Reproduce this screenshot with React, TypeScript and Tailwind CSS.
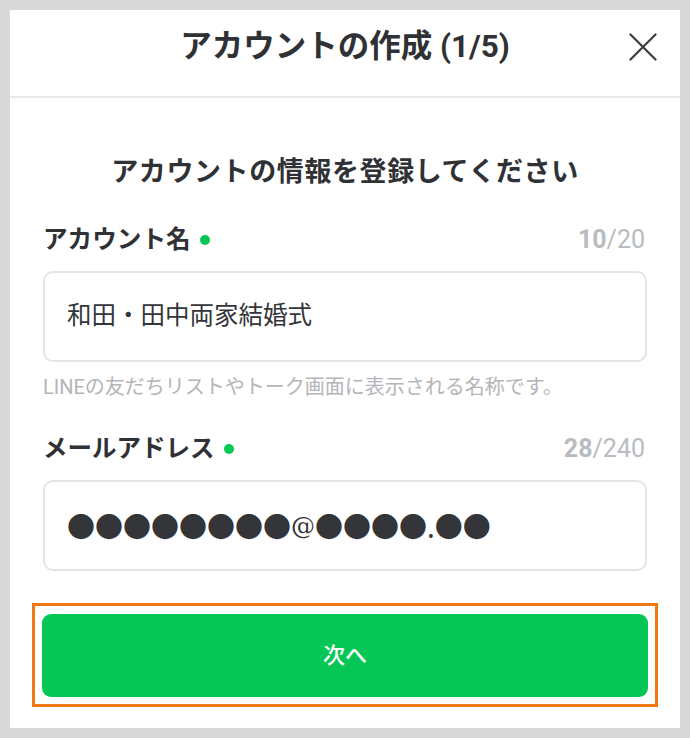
import React from "react";

const FONT = { fontFamily: 'Roboto, "Noto Sans CJK JP", sans-serif' };

function CloseIcon() {
  return (
    <svg width="28" height="28" viewBox="0 0 28 28" fill="none">
      <path d="M1.5 1.5 L26.5 26.5 M26.5 1.5 L1.5 26.5" stroke="#3a3c40" strokeWidth="2.2" strokeLinecap="round" />
    </svg>
  );
}

function Dot() {
  return <span className="ml-[9px] inline-block h-[10px] w-[10px] rounded-full bg-[#06c755]" />;
}

export default function App() {
  return (
    <div className="w-[690px] h-[738px] bg-[#d9d9d9] p-[10px]" style={FONT}>
      <div className="flex h-full flex-col bg-white">
        <div className="grid h-[88px] grid-cols-[1fr_auto_1fr] items-center border-b-2 border-[#e8e8e8] pb-[12px]">
          <div />
          <div className="text-[31.5px] font-bold leading-[40px] text-[#2f3135]">アカウントの作成 (1/5)</div>
          <div className="flex justify-end pr-[23px]">
            <CloseIcon />
          </div>
        </div>
        <div className="flex flex-col px-[33px]">
          <div className="mt-[54px] text-center text-[27px] font-bold leading-[40px] tracking-[0.6px] text-[#2f3135]">
            アカウントの情報を登録してください
          </div>
          <div className="mt-[31px] flex h-[34px] items-center justify-between">
            <div className="flex items-center text-[24.6px] font-bold text-[#2f3135]">
              アカウント名
              <Dot />
            </div>
            <div className="pr-[2px] text-[25px] text-[#b8bcc0]">
              <span className="font-bold">10</span>/20
            </div>
          </div>
          <div className="mt-[14px] flex h-[91px] items-center rounded-[10px] border-2 border-[#e4e4e4] px-[22px] text-[24.5px] text-[#333538]">
            和田・田中両家結婚式
          </div>
          <div className="mt-[12px] text-[20px] leading-[26px] text-[#b3b5b8]">
            LINEの友だちリストやトーク画面に表示される名称です。
          </div>
          <div className="mt-[32px] flex h-[34px] items-center justify-between">
            <div className="flex items-center text-[24.5px] font-bold text-[#2f3135]">
              メールアドレス
              <Dot />
            </div>
            <div className="pr-[2px] text-[25px] text-[#b8bcc0]">
              <span className="font-bold">28</span>/240
            </div>
          </div>
          <div className="mt-[14px] flex h-[91px] items-center rounded-[10px] border-2 border-[#e4e4e4] px-[22px] text-[28px] text-[#333538]" style={{ fontFamily: '"Noto Sans CJK JP", sans-serif' }}>
            ●●●●●●●●<span className="text-[24px]" style={{ fontFamily: '"DejaVu Serif", serif' }}>@</span>●●●●.●●
          </div>
          <div className="-mx-[11px] mt-[32px] border-[3px] border-[#f07812] px-[7px] pt-[8px] pb-[7px]">
            <div className="flex h-[83px] items-center justify-center rounded-[9px] bg-[#06c755] text-[22px] font-medium text-white">
              次へ
            </div>
          </div>
        </div>
      </div>
    </div>
  );
}
